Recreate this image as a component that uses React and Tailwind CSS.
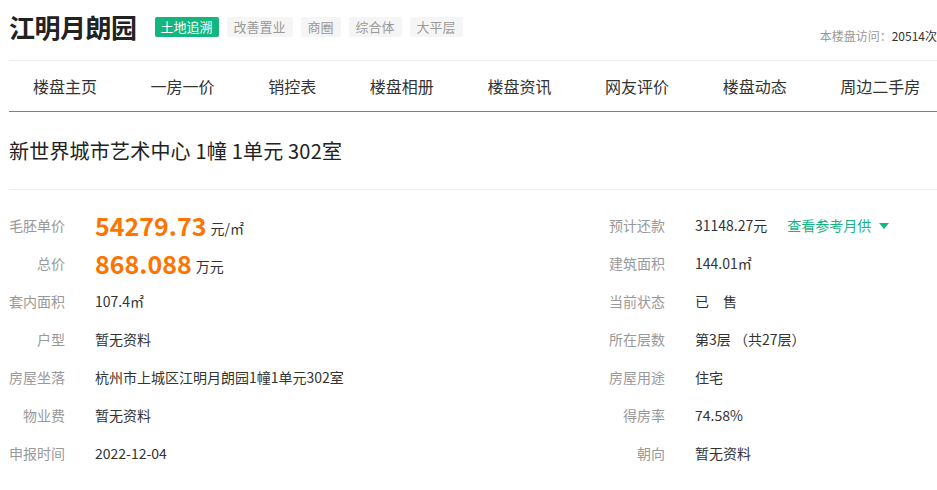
import React from 'react';

const tags = ['改善置业', '商圈', '综合体', '大平层'];
const navItems = ['楼盘主页', '一房一价', '销控表', '楼盘相册', '楼盘资讯', '网友评价', '楼盘动态', '周边二手房'];

const Row = ({ label, children, h = 'h-[38px]' }) => (
    <div className={`flex items-center ${h}`}>
        <span className="w-[56px] shrink-0 text-right text-[14px] text-[#999]">{label}</span>
        <div className="ml-[30px] flex items-center text-[14px] text-[#333]">{children}</div>
    </div>
);

const App = () => {
    return (
        <div
            className="w-[937px] h-[490px] overflow-hidden bg-white pl-[9px]"
            style={{ fontFamily: '"Noto Sans CJK SC", "Noto Sans", sans-serif' }}
        >
            {/* Header */}
            <div className="flex items-end justify-between h-[60px] pb-[20px]">
                <div className="flex items-center">
                    <h1 className="text-[26px] font-bold leading-none text-[#222] tracking-[-0.5px]">江明月朗园</h1>
                    <div className="flex items-center gap-[8px] ml-[18px]">
                        <span className="h-[20px] px-[6px] flex items-center rounded-[2px] bg-[#13b67f] text-white text-[13px]">土地追溯</span>
                        {tags.map((t) => (
                            <span key={t} className="h-[20px] px-[7px] flex items-center rounded-[2px] bg-[#f5f5f5] text-[#999] text-[13px]">{t}</span>
                        ))}
                    </div>
                </div>
                <div className="text-[12px] leading-none mb-[-2px]">
                    <span className="text-[#999]">本楼盘访问：</span>
                    <span className="text-[#333]">20514次</span>
                </div>
            </div>

            {/* Nav */}
            <div className="flex items-center h-[52px] border-t border-[#eee] border-b border-b-[#13b67f] pl-[24px] gap-[53.6px]">
                {navItems.map((n) => (
                    <span key={n} className="text-[16px] text-[#333] whitespace-nowrap">{n}</span>
                ))}
            </div>

            {/* Room title */}
            <div className="flex items-center h-[78px] border-b border-[#eee]">
                <h2 className="text-[20px] text-[#222] tracking-[0.2px]">新世界城市艺术中心 1幢 1单元 302室</h2>
            </div>

            {/* Details */}
            <div className="flex pt-[17px]">
                <div className="w-[600px] flex flex-col">
                    <Row label="毛胚单价" h="h-[37px]">
                        <span className="text-[25px] font-bold text-[#ff7300] leading-none">54279.73</span>
                        <span className="ml-[4px] mt-[6px]">元/㎡</span>
                    </Row>
                    <Row label="总价">
                        <span className="text-[25px] font-bold text-[#ff7300] leading-none">868.088</span>
                        <span className="ml-[4px] mt-[6px]">万元</span>
                    </Row>
                    <Row label="套内面积">107.4㎡</Row>
                    <Row label="户型">暂无资料</Row>
                    <Row label="房屋坐落">杭州市上城区江明月朗园1幢1单元302室</Row>
                    <Row label="物业费">暂无资料</Row>
                    <Row label="申报时间">2022-12-04</Row>
                </div>
                <div className="flex flex-col">
                    <Row label="预计还款" h="h-[37px]">
                        <span>31148.27元</span>
                        <span className="ml-[20px] text-[#13b67f] flex items-center">
                            查看参考月供
                            <svg width="10" height="6" viewBox="0 0 10 6" className="ml-[8px]">
                                <path d="M0 0 L10 0 L5 6 Z" fill="#13b67f" />
                            </svg>
                        </span>
                    </Row>
                    <Row label="建筑面积">144.01㎡</Row>
                    <Row label="当前状态">
                        <span>已</span>
                        <span className="ml-[14px]">售</span>
                    </Row>
                    <Row label="所在层数">第3层 （共27层）</Row>
                    <Row label="房屋用途">住宅</Row>
                    <Row label="得房率">74.58%</Row>
                    <Row label="朝向">暂无资料</Row>
                </div>
            </div>
        </div>
    );
};

export default App;
